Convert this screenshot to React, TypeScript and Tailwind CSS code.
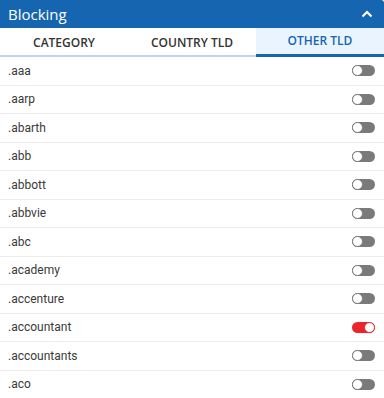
import { useState } from "react";

const tlds = [
  ".aaa",
  ".aarp",
  ".abarth",
  ".abb",
  ".abbott",
  ".abbvie",
  ".abc",
  ".academy",
  ".accenture",
  ".accountant",
  ".accountants",
  ".aco",
];

function Toggle({ on, onClick }: { on: boolean; onClick: () => void }) {
  return (
    <button
      onClick={onClick}
      className={`relative w-[23px] h-[11px] rounded-full ${on ? "bg-[#e8262b]" : "bg-[#7a7a7a]"}`}
    >
      <span
        className={`absolute top-0 w-[11px] h-[11px] rounded-full bg-white border-[1.5px] ${
          on ? "right-0 border-[#e8262b]" : "left-0 border-[#7a7a7a]"
        }`}
      />
    </button>
  );
}

export default function App() {
  const [tab, setTab] = useState(2);
  const [blocked, setBlocked] = useState<string[]>([".accountant"]);

  const toggle = (t: string) =>
    setBlocked((prev) => (prev.includes(t) ? prev.filter((x) => x !== t) : [...prev, t]));

  const tabs = ["CATEGORY", "COUNTRY TLD", "OTHER TLD"];

  return (
    <div className="w-[384px] h-[398px] overflow-hidden bg-white font-['Open_Sans',sans-serif]">
      {/* header */}
      <div className="h-[28px] bg-[#1565b0] rounded-tr-[3px] flex items-center justify-between pl-[8px] pr-[11px]">
        <span className="text-white text-[15px] leading-none">Blocking</span>
        <svg width="12" height="8" viewBox="0 0 12 8">
          <path d="M1.5 6.5 L6 2 L10.5 6.5" stroke="white" strokeWidth="2.2" fill="none" />
        </svg>
      </div>

      {/* tabs */}
      <div className="grid grid-cols-3 h-[29px] border-b-2 border-[#b9d6f5]">
        {tabs.map((t, i) => (
          <button
            key={t}
            onClick={() => setTab(i)}
            className={`text-[12px] font-semibold flex items-center justify-center -mb-[2px] ${
              tab === i
                ? "bg-[#eaf4fe] text-[#1565b0] border-b-[3px] border-[#1565b0]"
                : "text-[#333333]"
            }`}
          >
            {t}
          </button>
        ))}
      </div>

      {/* list */}
      <div className="font-['Roboto',sans-serif]">
        {tlds.map((t) => (
          <div
            key={t}
            className="h-[28.5px] flex items-center justify-between pl-[8px] pr-[9px] border-b border-[#ececec]"
          >
            <span className="text-[12px] text-[#3a3a3a]">{t}</span>
            <Toggle on={blocked.includes(t)} onClick={() => toggle(t)} />
          </div>
        ))}
      </div>
    </div>
  );
}
